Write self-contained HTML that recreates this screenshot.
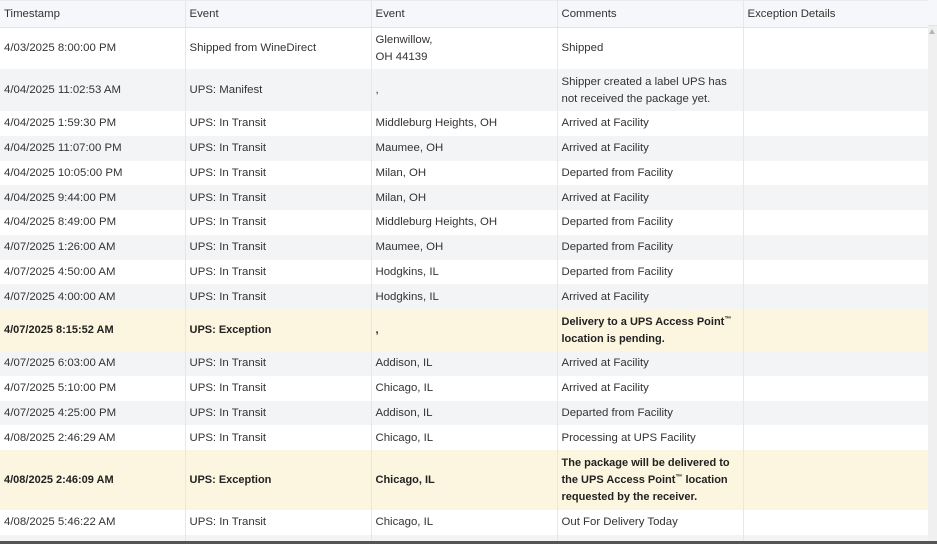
<!DOCTYPE html>
<html style="width:937px;height:544px;overflow:hidden"><head><style>
*{margin:0;padding:0;box-sizing:border-box}
body{width:937px;height:544px;overflow:hidden;background:#fff;font-family:"Liberation Sans",sans-serif;font-size:11.4px;color:#333;position:relative}
table{border-collapse:collapse;table-layout:fixed;width:928px;position:absolute;left:0;top:1px}
td,th{border-right:1px solid #e3e7ee;padding:1px 4px 0 4px;vertical-align:middle;line-height:17px;text-align:left;font-weight:normal;overflow:hidden;white-space:nowrap}
th{height:26px;background:#f5f7fa;border-bottom:1px solid #dfe3ea;color:#333}
tr.g td{background:#f3f4f6}
tr.e td{background:#fcf5e0;font-weight:bold;color:#222;font-size:11px}
tr td{height:24.75px}
tr.t td{height:42px}
tr.t3 td{height:60px}
.tm{font-size:7px;line-height:0;position:relative;top:-4px}
.sb{position:absolute;left:928px;top:26px;width:9px;height:518px;background:#f0f0f0}
.sb:before{content:"";position:absolute;left:1px;top:3px;border-left:3.5px solid transparent;border-right:3.5px solid transparent;border-bottom:5px solid #b5b5b5}
.hd{position:absolute;left:928px;top:0;width:9px;height:26px;background:#f5f7fa;border-bottom:1px solid #dfe3ea}
.top{position:absolute;left:0;top:0;width:937px;height:1px;background:#e8ebf0}
.bl{position:absolute;left:0;top:541px;width:937px;height:3px;background:#555}
</style></head><body>
<table>
<colgroup><col style="width:185px"><col style="width:186px"><col style="width:186px"><col style="width:186px"><col style="width:185px"></colgroup>
<tr><th>Timestamp</th><th>Event</th><th>Event</th><th>Comments</th><th>Exception Details</th></tr>
<tr class="t"><td>4/03/2025 8:00:00 PM</td><td>Shipped from WineDirect</td><td>Glenwillow,<br>OH 44139</td><td>Shipped</td><td></td></tr>
<tr class="t g"><td>4/04/2025 11:02:53 AM</td><td>UPS: Manifest</td><td>,</td><td>Shipper created a label UPS has<br>not received the package yet.</td><td></td></tr>
<tr><td>4/04/2025 1:59:30 PM</td><td>UPS: In Transit</td><td>Middleburg Heights, OH</td><td>Arrived at Facility</td><td></td></tr>
<tr class="g"><td>4/04/2025 11:07:00 PM</td><td>UPS: In Transit</td><td>Maumee, OH</td><td>Arrived at Facility</td><td></td></tr>
<tr><td>4/04/2025 10:05:00 PM</td><td>UPS: In Transit</td><td>Milan, OH</td><td>Departed from Facility</td><td></td></tr>
<tr class="g"><td>4/04/2025 9:44:00 PM</td><td>UPS: In Transit</td><td>Milan, OH</td><td>Arrived at Facility</td><td></td></tr>
<tr><td>4/04/2025 8:49:00 PM</td><td>UPS: In Transit</td><td>Middleburg Heights, OH</td><td>Departed from Facility</td><td></td></tr>
<tr class="g"><td>4/07/2025 1:26:00 AM</td><td>UPS: In Transit</td><td>Maumee, OH</td><td>Departed from Facility</td><td></td></tr>
<tr><td>4/07/2025 4:50:00 AM</td><td>UPS: In Transit</td><td>Hodgkins, IL</td><td>Departed from Facility</td><td></td></tr>
<tr class="g"><td>4/07/2025 4:00:00 AM</td><td>UPS: In Transit</td><td>Hodgkins, IL</td><td>Arrived at Facility</td><td></td></tr>
<tr class="t e"><td>4/07/2025 8:15:52 AM</td><td>UPS: Exception</td><td>,</td><td>Delivery to a UPS Access Point<span class="tm">™</span><br>location is pending.</td><td></td></tr>
<tr class="g"><td>4/07/2025 6:03:00 AM</td><td>UPS: In Transit</td><td>Addison, IL</td><td>Arrived at Facility</td><td></td></tr>
<tr><td>4/07/2025 5:10:00 PM</td><td>UPS: In Transit</td><td>Chicago, IL</td><td>Arrived at Facility</td><td></td></tr>
<tr class="g"><td>4/07/2025 4:25:00 PM</td><td>UPS: In Transit</td><td>Addison, IL</td><td>Departed from Facility</td><td></td></tr>
<tr><td>4/08/2025 2:46:29 AM</td><td>UPS: In Transit</td><td>Chicago, IL</td><td>Processing at UPS Facility</td><td></td></tr>
<tr class="t3 e"><td>4/08/2025 2:46:09 AM</td><td>UPS: Exception</td><td>Chicago, IL</td><td>The package will be delivered to<br>the UPS Access Point<span class="tm">™</span> location<br>requested by the receiver.</td><td></td></tr>
<tr><td>4/08/2025 5:46:22 AM</td><td>UPS: In Transit</td><td>Chicago, IL</td><td>Out For Delivery Today</td><td></td></tr>
<tr class="g"><td style="vertical-align:top;padding-top:3px">4/08/2025 3:04:00 PM</td><td style="vertical-align:top;padding-top:3px">UPS: Delivered</td><td style="vertical-align:top;padding-top:3px">Chicago, IL</td><td style="vertical-align:top;padding-top:3px">UPS Access Point™ possession</td><td></td></tr>
</table>
<div class="top"></div>
<div class="hd"></div>
<div class="sb"></div>
<div class="bl"></div>
</body></html>
